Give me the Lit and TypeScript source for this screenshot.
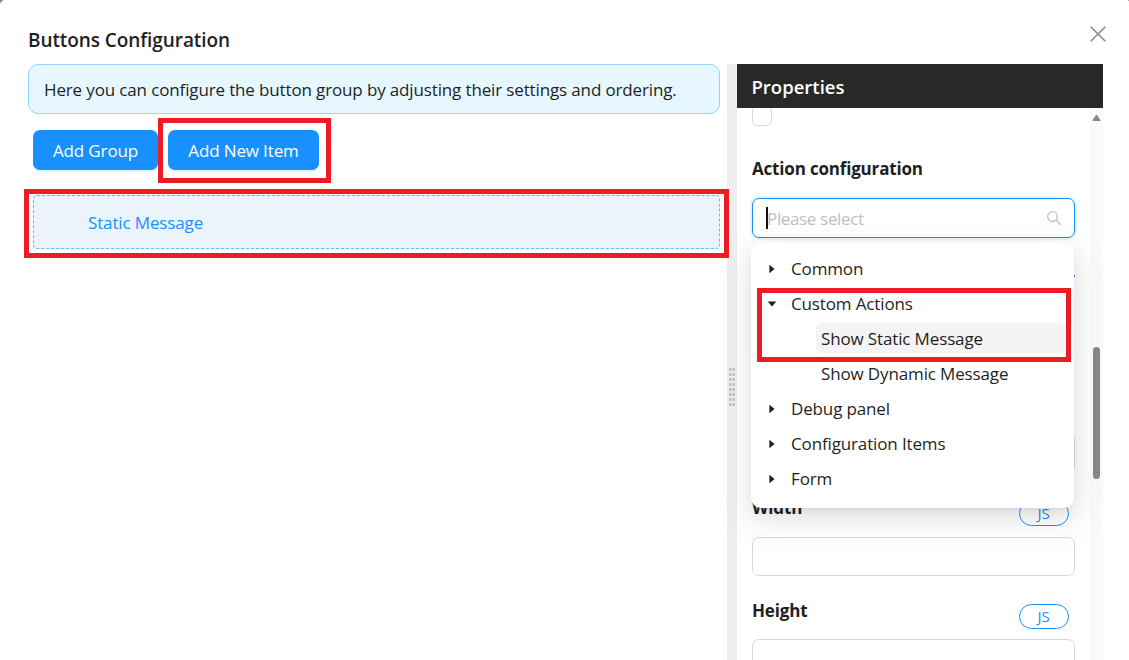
import { LitElement, html, svg, css, nothing } from "lit";
import { customElement, property } from "lit/decorators.js";
import { classMap } from "lit/directives/class-map.js";

interface TreeNode {
  label: string;
  open?: boolean;
  child?: boolean;
  active?: boolean;
}

const NODES: TreeNode[] = [
  { label: "Common" },
  { label: "Custom Actions", open: true },
  { label: "Show Static Message", child: true, active: true },
  { label: "Show Dynamic Message", child: true },
  { label: "Debug panel" },
  { label: "Configuration Items" },
  { label: "Form" },
];

@customElement("action-tree")
class ActionTree extends LitElement {
  static styles = css`
    :host {
      display: block;
      box-sizing: border-box;
      background: #fff;
      border-radius: 10px;
      padding: 10px 5px 9px 5px;
      box-shadow: 0 7.5px 20px 0 rgba(0, 0, 0, 0.08), 0 4px 8px -5px rgba(0, 0, 0, 0.12),
        0 11px 35px 10px rgba(0, 0, 0, 0.05);
    }
    .row {
      display: flex;
      height: 30px;
      margin-bottom: 5px;
      line-height: 32px;
      align-items: stretch;
    }
    .switch {
      width: 30px;
      padding: 1px 0 0 1px;
      box-sizing: border-box;
      display: flex;
      align-items: center;
      justify-content: center;
    }
    .switch svg {
      display: block;
      fill: #1f1f1f;
    }
    .label {
      flex: 1;
      padding-left: 5px;
      margin-right: 3px;
      border-radius: 5px;
      white-space: nowrap;
    }
    .child {
      padding-left: 60px;
    }
    .active .label {
      background: #f4f4f4;
    }
  `;

  render() {
    return NODES.map(
      (n) => html`<div class=${classMap({ row: true, child: !!n.child, active: !!n.active })}>
        ${n.child
          ? nothing
          : html`<span class="switch"
              ><svg width="10" height="10" viewBox="0 0 10 10">
                ${n.open ? svg`<path d="M0.7 2.5h8.6L5 7.4z" />` : svg`<path d="M2.4 0.7v8.6L7.5 5z" />`}
              </svg></span
            >`}
        <span class="label">${n.label}</span>
      </div>`,
    );
  }
}

@customElement("size-field")
class SizeField extends LitElement {
  @property() label = "";

  static styles = css`
    :host {
      display: block;
      height: 102.4px;
    }
    .head {
      display: flex;
      justify-content: space-between;
      height: 40.7px;
      padding-right: 6px;
    }
    .name {
      font-weight: 700;
      line-height: 24px;
      letter-spacing: -0.15px;
    }
    .js {
      box-sizing: border-box;
      width: 50px;
      height: 25px;
      margin-top: 5px;
      border: 1px solid #1890ff;
      border-radius: 13px;
      background: #fff;
      color: #1890ff;
      font-size: 15px;
      line-height: 22px;
      text-align: center;
      padding-right: 1px;
    }
    .input {
      box-sizing: border-box;
      height: 39px;
      border: 1px solid #d9d9d9;
      border-radius: 7px;
      background: transparent;
    }
  `;

  render() {
    return html`<div class="head"><span class="name">${this.label}</span><span class="js">JS</span></div>
      <div class="input"></div>`;
  }
}

@customElement("app-root")
class AppRoot extends LitElement {
  static styles = css`
    :host {
      display: block;
      position: relative;
      box-sizing: border-box;
      width: 1129px;
      height: 660px;
      overflow: hidden;
      background: #fff;
      color: #1f1f1f;
      font-family: "Open Sans", "Noto Sans", sans-serif;
      font-size: 17px;
      letter-spacing: -0.14px;
    }
    .dialog {
      display: flex;
      flex-direction: column;
      height: 660px;
    }
    .titlebar {
      display: flex;
      flex: none;
      height: 64px;
      padding: 0 22px 0 28px;
      justify-content: space-between;
    }
    .title {
      padding-top: 25px;
      font-size: 19px;
      font-weight: 600;
      line-height: 30px;
      letter-spacing: -0.08px;
    }
    .close {
      margin-top: 25px;
      width: 18px;
      height: 18px;
    }
    .body {
      display: flex;
      flex: 1;
      min-height: 0;
      padding: 0 26px 0 28px;
    }
    .left {
      width: 692px;
      margin-right: 7px;
    }
    .alert {
      box-sizing: border-box;
      height: 50px;
      padding: 0 15px;
      border: 1px solid #91d5ff;
      border-radius: 10px;
      background: #e6f7ff;
      line-height: 49px;
      white-space: nowrap;
    }
    .buttons {
      display: flex;
      gap: 10px;
      padding: 16px 5px 0;
    }
    .btn {
      height: 40px;
      width: 125px;
      border-radius: 7px;
      background: #1890ff;
      box-shadow: 0 2px 0 rgba(5, 145, 255, 0.1);
      color: #fff;
      line-height: 41px;
      text-align: center;
      white-space: nowrap;
    }
    .wide {
      width: 151px;
    }
    .item {
      box-sizing: border-box;
      height: 54px;
      margin: 25px 0 0 5px;
      padding-left: 54px;
      border: 1px dashed #69b1ff;
      border-radius: 4px;
      background: #ebf3fb;
      color: #1890ff;
      line-height: 53px;
    }
    .splitter {
      box-sizing: border-box;
      display: flex;
      flex-direction: column;
      align-items: center;
      justify-content: center;
      width: 10px;
      padding-top: 50px;
      background: #eee;
    }
    .props {
      display: flex;
      flex-direction: column;
      width: 366px;
      min-height: 0;
    }
    .props-head {
      flex: none;
      height: 44px;
      padding-left: 14.5px;
      background: #282828;
      color: #fff;
      font-size: 18.5px;
      font-weight: 600;
      line-height: 46px;
      letter-spacing: 0;
    }
    .scroll {
      display: flex;
      flex: 1;
      min-height: 0;
      overflow: hidden;
    }
    .form {
      width: 323px;
      padding: 0 15px;
    }
    .check {
      box-sizing: border-box;
      width: 20px;
      height: 20px;
      margin-top: -2px;
      border: 1px solid #d9d9d9;
      border-radius: 5px;
    }
    .section {
      height: 40px;
      padding-top: 32px;
      font-weight: 700;
      line-height: 22px;
      letter-spacing: -0.18px;
    }
    .select {
      display: flex;
      align-items: center;
      box-sizing: border-box;
      height: 40px;
      padding: 0 12px 0 13px;
      border: 1px solid #1890ff;
      border-radius: 7px;
      box-shadow: 0 0 0 2px rgba(5, 145, 255, 0.1);
      color: #bfbfbf;
    }
    .caret {
      width: 2px;
      height: 22px;
      margin-right: -1px;
      background: #111;
    }
    .placeholder {
      flex: 1;
      letter-spacing: -0.35px;
    }
    .panel {
      height: 39px;
      margin-top: 37px;
      border-bottom: 2px solid transparent;
      border-top: 2px solid #1890ff;
      box-sizing: border-box;
    }
    .hidden-input {
      box-sizing: border-box;
      height: 39px;
      margin: 119px 0 24.3px;
      border: 1px solid #d9d9d9;
      border-radius: 7px;
    }
    .track {
      display: flex;
      flex-direction: column;
      align-items: center;
      width: 13px;
      background: #fafafa;
    }
    .up {
      display: block;
      margin-top: 6px;
    }
    .thumb {
      width: 7px;
      height: 132px;
      margin-top: 225px;
      border-radius: 4px;
      background: #888;
    }
    .dropdown {
      position: absolute;
      left: 751px;
      top: 243px;
      width: 323px;
      height: 265px;
    }
    .mark {
      position: absolute;
      box-sizing: border-box;
      border: 5px solid #ed1c24;
    }
    .m1 {
      left: 158px;
      top: 118px;
      width: 173px;
      height: 65px;
    }
    .m2 {
      left: 24px;
      top: 189px;
      width: 705px;
      height: 69px;
    }
    .m3 {
      left: 757px;
      top: 288px;
      width: 314px;
      height: 74px;
    }
    .corners {
      position: absolute;
      left: 0;
      top: 0;
    }
  `;

  render() {
    return html`
      <div class="dialog">
        <div class="titlebar">
          <div class="title">Buttons Configuration</div>
          <svg class="close" viewBox="0 0 18 18">
            <path d="M1.7 1.7l14.6 14.6M16.3 1.7L1.7 16.3" stroke="#8c8c8c" stroke-width="1.6" />
          </svg>
        </div>
        <div class="body">
          <div class="left">
            <div class="alert">Here you can configure the button group by adjusting their settings and ordering.</div>
            <div class="buttons">
              <div class="btn">Add Group</div>
              <div class="btn wide">Add New Item</div>
            </div>
            <div class="item">Static Message</div>
          </div>
          <div class="splitter">
            <svg width="6" height="50" viewBox="0 0 6 50">
              ${Array.from(
                { length: 8 },
                (_, i) =>
                  svg`<path d="M0 ${i * 5 + 6}h6v3h-6z" fill="#d9d9d9"/><path d="M0 ${i * 5 + 6}h2v3h-2zM4 ${i * 5 + 6}h2v3h-2z" fill="#c6c6c6"/>`,
              )}
            </svg>
          </div>
          <div class="props">
            <div class="props-head">Properties</div>
            <div class="scroll">
              <div class="form">
                <div class="check"></div>
                <div class="section">Action configuration</div>
                <div class="select">
                  <span class="caret"></span>
                  <span class="placeholder">Please select</span>
                  <svg width="16" height="16" viewBox="0 0 16 16" fill="none" stroke="#bfbfbf" stroke-width="1.3">
                    <circle cx="6.6" cy="6.6" r="4.9" />
                    <path d="M10.2 10.2l4.6 4.6" />
                  </svg>
                </div>
                <div class="panel"></div>
                <div class="hidden-input"></div>
                <size-field label="Width"></size-field>
                <size-field label="Height"></size-field>
              </div>
              <div class="track">
                <svg class="up" width="9" height="8" viewBox="0 0 9 8"><path d="M4 1h1l3.6 5.2-.4.8H.8L.4 6.2z" fill="#888" /></svg>
                <div class="thumb"></div>
              </div>
            </div>
          </div>
        </div>
      </div>
      <action-tree class="dropdown"></action-tree>
      <div class="mark m1"></div>
      <div class="mark m2"></div>
      <div class="mark m3"></div>
      <svg class="corners" width="1129" height="5" viewBox="0 0 1129 5">
        <path d="M0 0h4L2 1 1 2 0 4z" fill="#85857f" />
        <path d="M1127.5 0h1.5v1z" fill="#85857f" />
      </svg>
    `;
  }
}
